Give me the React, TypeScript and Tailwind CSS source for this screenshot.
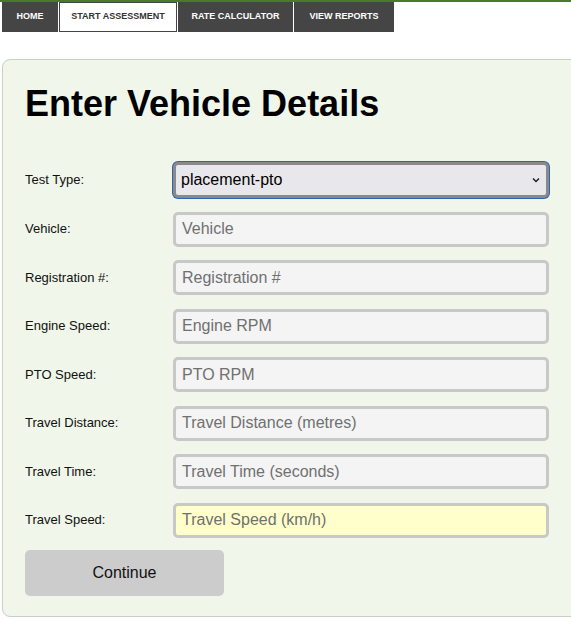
import { useState } from "react";

const tabs = [
  { label: "HOME", w: "w-[56px]", active: false },
  { label: "START ASSESSMENT", w: "w-[118px]", active: true },
  { label: "RATE CALCULATOR", w: "w-[115px]", active: false },
  { label: "VIEW REPORTS", w: "w-[100px]", active: false },
];

const fields = [
  { label: "Vehicle:", placeholder: "Vehicle" },
  { label: "Registration #:", placeholder: "Registration #" },
  { label: "Engine Speed:", placeholder: "Engine RPM" },
  { label: "PTO Speed:", placeholder: "PTO RPM" },
  { label: "Travel Distance:", placeholder: "Travel Distance (metres)" },
  { label: "Travel Time:", placeholder: "Travel Time (seconds)" },
];

export default function App() {
  const [testType, setTestType] = useState("placement-pto");

  return (
    <div className="min-h-screen w-full overflow-hidden bg-white" style={{ fontFamily: '"Liberation Sans", Arial, sans-serif' }}>
      {/* grass strip */}
      <div className="h-[2px] w-full bg-[#4a7a2a]" />

      {/* Nav */}
      <nav className="flex pl-[2px] h-[30px]">
        {tabs.map((t) => (
          <a
            key={t.label}
            href="#"
            className={`${t.w} mr-[1px] flex items-center justify-center text-[9px] font-bold ${
              t.active ? "bg-white text-[#333] border border-[#444]" : "bg-[#454545] text-white"
            }`}
          >
            {t.label}
          </a>
        ))}
      </nav>

      {/* Card */}
      <div className="mt-[27px] ml-[2px] w-[calc(100%+20px)] rounded-[8px] border border-[#cbd0c6] bg-[#f0f6e9] pl-[22px] pt-[23px] pb-[20px]">
        <h1 className="text-[36px] font-bold text-black leading-[41px]">Enter Vehicle Details</h1>

        <div className="mt-[38px] flex flex-col gap-[13.5px]">
          <div className="flex items-center">
            <label className="w-[148px] text-[13px] text-[#111]">Test Type:</label>
            <div className="relative w-[376px]">
              <select
                value={testType}
                onChange={(e) => setTestType(e.target.value)}
                className="appearance-none w-full h-[36px] rounded-[5px] border-[3px] border-[#8a8a8a] bg-[#e8e7ec] pl-[5px] text-[16px] text-black shadow-[0_0_0_1px_#2d64b3] outline-none"
              >
                <option value="placement-pto">placement-pto</option>
                <option value="placement">placement</option>
                <option value="pto">pto</option>
              </select>
              <svg className="pointer-events-none absolute right-[9px] top-[15px]" width="8" height="6" viewBox="0 0 8 6">
                <path d="M1 1.5 L4 4.5 L7 1.5" fill="none" stroke="#222" strokeWidth="1.5" />
              </svg>
            </div>
          </div>

          {fields.map((f) => (
            <div key={f.label} className="flex items-center">
              <label className="w-[148px] text-[13px] text-[#111]">{f.label}</label>
              <input
                placeholder={f.placeholder}
                className="w-[376px] h-[35px] rounded-[5px] border-[3px] border-[#c8c8c8] bg-[#f4f4f4] pl-[6px] text-[16px] text-black placeholder:text-[#707070] outline-none"
              />
            </div>
          ))}

          <div className="flex items-center">
            <label className="w-[148px] text-[13px] text-[#111]">Travel Speed:</label>
            <input
              placeholder="Travel Speed (km/h)"
              className="w-[376px] h-[35px] rounded-[5px] border-[3px] border-[#c8c8c8] bg-[#ffffcc] pl-[6px] text-[16px] text-black placeholder:text-[#707070] outline-none"
            />
          </div>
        </div>

        <button className="mt-[12px] w-[199px] h-[46px] rounded-[5px] bg-[#cccccc] text-[16px] text-[#111]">
          Continue
        </button>
      </div>
    </div>
  );
}
